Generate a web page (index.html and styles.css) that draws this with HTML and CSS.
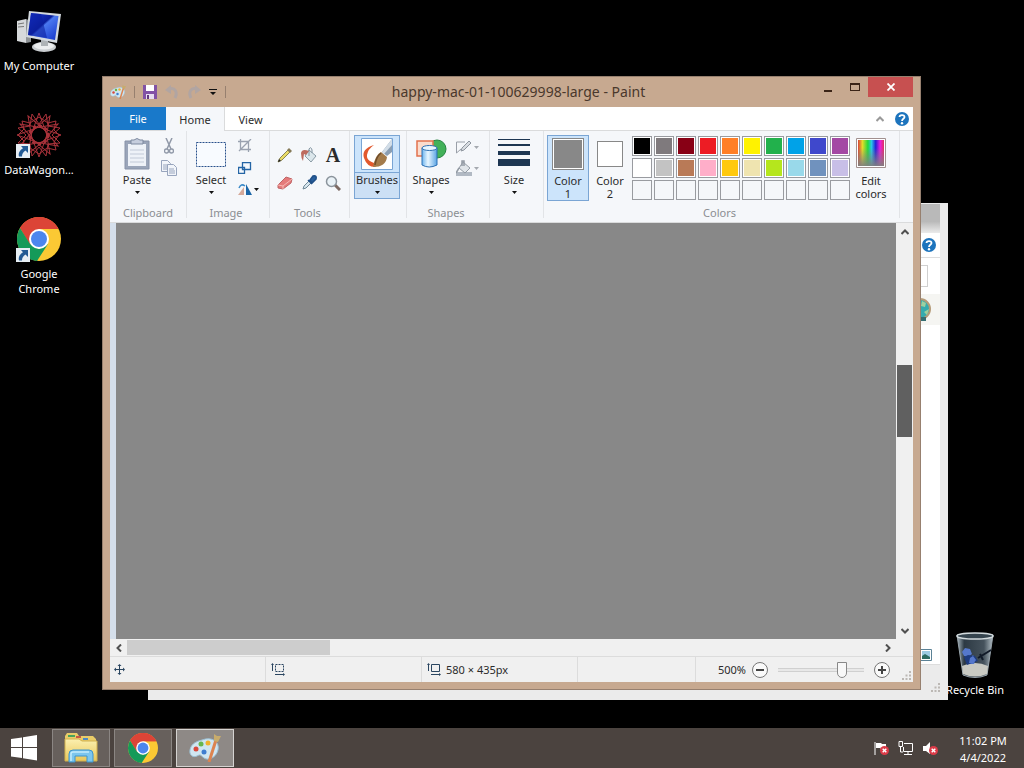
FILE: index.html
```html
<!DOCTYPE html>
<html lang="en">
  <head>
    <meta charset="UTF-8" />
    <meta name="viewport" content="width=device-width, initial-scale=1.0" />
    <title>happy-mac-01-100629998-large - Paint</title>
    <link rel="stylesheet" href="styles.css">
  </head>
  <body>
    <svg class="defs" aria-hidden="true">
      <defs>
        <linearGradient id="screen" x1="0" y1="0" x2="1" y2="1">
          <stop offset="0" stop-color="#1a3ce0" />
          <stop offset="0.45" stop-color="#0a1e9c" />
          <stop offset="0.5" stop-color="#4a78f0" />
          <stop offset="1" stop-color="#1232c8" />
        </linearGradient>
        <linearGradient id="folder" x1="0" y1="0" x2="0" y2="1">
          <stop offset="0" stop-color="#fbf0b0" />
          <stop offset="1" stop-color="#e9c75a" />
        </linearGradient>
        <linearGradient id="glass" x1="0" y1="0" x2="1" y2="0">
          <stop offset="0" stop-color="#a9b7bf" />
          <stop offset="0.2" stop-color="#2d3a44" />
          <stop offset="0.75" stop-color="#45525c" />
          <stop offset="1" stop-color="#b4c0c7" />
        </linearGradient>
        <linearGradient id="cylinder" x1="0" y1="0" x2="1" y2="0">
          <stop offset="0" stop-color="#6db4ee" />
          <stop offset="0.4" stop-color="#e8f6ff" />
          <stop offset="1" stop-color="#5aa4e4" />
        </linearGradient>
        <linearGradient id="rainbow" x1="0" y1="0" x2="1" y2="0">
          <stop offset="0" stop-color="#d8403a" />
          <stop offset="0.17" stop-color="#e6dc28" />
          <stop offset="0.38" stop-color="#22d83c" />
          <stop offset="0.52" stop-color="#28c8e8" />
          <stop offset="0.68" stop-color="#2620d8" />
          <stop offset="0.85" stop-color="#e81ee0" />
          <stop offset="1" stop-color="#e03060" />
        </linearGradient>
        <linearGradient id="fade" x1="0" y1="0" x2="0" y2="1">
          <stop offset="0.3" stop-color="#808080" stop-opacity="0" />
          <stop offset="1" stop-color="#808080" stop-opacity="0.95" />
        </linearGradient>
        <symbol id="chrome" viewBox="0 0 44 44">
          <circle cx="22" cy="22" r="22" fill="#fbc934" />
          <path d="M22 22 3 11A22 22 0 0 1 41 11V12H22Z" fill="#dc4437" />
          <path d="M22 12H41.600A22 22 0 0 0 3 11L13 28Z" fill="#dc4437" />
          <path d="M3 11A22 22 0 0 0 20 44L31 27 22 32 13 27Z" fill="#149a59" />
          <circle cx="22" cy="22" r="10" fill="#fff" />
          <circle cx="22" cy="22" r="8" fill="#4c86ee" />
        </symbol>
        <symbol id="shortcut" viewBox="0 0 14 14">
          <path d="M0 0H14V14H0Z" fill="#e6eef4" />
          <path d="M5 2H12V9L9.500 6.500C7 8 6 10 6 12.500H3C2 9 4 6 7 4.200Z" fill="#225a94" />
        </symbol>
        <symbol id="palette" viewBox="0 0 32 28">
          <path d="M13 6C23 2 31 8 29 16S19 27 15 24 12 20 8 22 0 21 1 16 5 8 13 6Z" fill="#cfe6f2" stroke="#9cc0d4" />
          <circle cx="7" cy="15" r="2.500" fill="#d8493c" />
          <circle cx="12" cy="10" r="2.500" fill="#66b64e" />
          <circle cx="19" cy="9" r="2.500" fill="#f0b22e" />
          <circle cx="15" cy="18" r="2.500" fill="#3f7ed0" />
          <path d="M27 6 20 28" stroke="#dc8450" stroke-width="3" />
          <path d="M25 0 28 2 32 2 29 8 25 7Z" fill="#c8ac6c" />
        </symbol>
        <symbol id="help" viewBox="0 0 14 14">
          <circle cx="7" cy="7" r="7" fill="#1d74bd" />
          <path d="M4.500 5C4.500 2.500 9.500 2.300 9.500 5 9.500 6.800 7 6.800 7 9" fill="none" stroke="#fff" stroke-width="1.800" />
          <circle cx="7" cy="11.200" r="1.200" fill="#fff" />
        </symbol>
        <symbol id="down" viewBox="0 0 5 3">
          <path d="M0 0H5L2.500 3Z" fill="currentColor" />
        </symbol>
        <symbol id="grip" viewBox="0 0 9 9">
          <path d="M7 0H9V2H7ZM3.500 3.500H5.500V5.500H3.500ZM7 3.500H9V5.500H7ZM0 7H2V9H0ZM3.500 7H5.500V9H3.500ZM7 7H9V9H7Z" fill="#bcb8b4" />
        </symbol>
        <symbol id="muted" viewBox="0 0 10 10">
          <circle cx="5" cy="5" r="5" fill="#dc3b48" />
          <path d="M3 3 7 7M7 3 3 7" stroke="#fff" stroke-width="1.600" />
        </symbol>
      </defs>
    </svg>

    <div class="screen">
      <main class="desktop">
        <a href="#" class="shortcut my-computer">
          <svg width="46" height="42" viewBox="0 0 46 42">
            <path d="M1 11 10 9V33L1 31Z" fill="#d6d9db" />
            <path d="M10 9 15 11V32L10 33Z" fill="#8d9295" />
            <path d="M2 14 8 13M2 17 8 16.500" stroke="#777" />
            <ellipse cx="28" cy="37" rx="12" ry="5" fill="#c9cdd0" />
            <ellipse cx="28" cy="36" rx="10" ry="3.500" fill="#eceeef" />
            <path d="M25 29H32V36H25Z" fill="#aeb3b6" />
            <path d="M13 1 45 4 41 33 10 27Z" fill="#d3d9df" />
            <path d="M15 3 42.500 6 39 30 12 25Z" fill="url(#screen)" />
            <path d="M15 3 25 4 31 28 12 25Z" fill="#0c1fa0" opacity="0.6" />
          </svg>
          <span>My Computer</span>
        </a>
        <a href="#" class="shortcut">
          <svg width="46" height="46" viewBox="0 0 46 46">
            <g fill="none" stroke="#a8323a" stroke-width="1">
              <path d="M23 1 31 23 23 45 15 23ZM1 23 23 15 45 23 23 31Z" />
              <path d="M23 1 31 23 23 45 15 23ZM1 23 23 15 45 23 23 31Z" transform="rotate(30 23 23)" />
              <path d="M23 1 31 23 23 45 15 23ZM1 23 23 15 45 23 23 31Z" transform="rotate(60 23 23)" />
              <path d="M6 9 14 11 23 5 32 11 40 9 38 18 43 23 38 30 40 38 31 36 23 42 14 36 6 38 8 29 2 23 8 17Z" />
              <path d="M16 2 23 12 30 2 32 14 44 16 36 23 44 31 32 32 30 44 23 35 16 44 14 32 2 31 10 23 2 16 14 14Z" />
              <circle cx="23" cy="23" r="9" stroke-width="3" stroke-dasharray="3 3" />
            </g>
            <circle cx="23" cy="23" r="4" fill="#000" />
            <use href="#shortcut" y="32" width="14" height="14" />
          </svg>
          <span>DataWagon...</span>
        </a>
        <a href="#" class="shortcut">
          <svg width="46" height="46" viewBox="0 0 46 46">
            <use href="#chrome" x="1" y="1" width="44" height="44" />
            <use href="#shortcut" y="32" width="14" height="14" />
          </svg>
          <span>Google<br />Chrome</span>
        </a>
        <a href="#" class="shortcut recycle-bin">
          <svg width="38" height="46" viewBox="0 0 38 46">
            <path d="M1 3 7 43Q19 48 31 43L37 3Z" fill="url(#glass)" stroke="#98a4ac" />
            <ellipse cx="19" cy="4" rx="18" ry="3" fill="#35444e" stroke="#d2dadd" stroke-width="1.500" />
            <path d="M6 34Q19 28 32 34L31 42Q19 47 7 42Z" fill="#c9cac3" />
            <path d="M6 20 9 16 14 17 16 22 12 25 8 24ZM13 26 17 23 20 27 18 32 13 32Z" fill="#5578cc" />
            <path d="M8 25 12 23 19 24 22 29 11 33Z" fill="#1e3c80" />
            <path d="M14 26 17 24 20 28 17 32 13 31Z" fill="#5578cc" />
            <path d="M22 26 35 18M24 22 27 28" stroke="#111a28" stroke-width="2" fill="none" />
          </svg>
          <span>Recycle Bin</span>
        </a>

        <section class="back-window" aria-label="Explorer">
          <div class="back-title"></div>
          <div class="back-tabs"><svg width="14" height="14"><use href="#help" /></svg></div>
          <div class="back-address"><span></span></div>
          <div class="back-toolbar">
            <svg width="24" height="24" viewBox="0 0 24 24">
              <circle cx="12" cy="11" r="10" fill="#36abae" stroke="#b59b78" stroke-width="2" />
              <path d="M14 3 18 5 17 9 13 8ZM16 14 21 11 19 17Z" fill="#9ed0a0" />
              <path d="M8 19H18V23H8Z" fill="#356e72" />
            </svg>
          </div>
          <div class="back-files"></div>
          <div class="back-status">
            <svg width="12" height="12" viewBox="0 0 12 12">
              <path d="M0.500 0.500H11.500V11.500H0.500Z" fill="#fff" stroke="#5b8296" />
              <path d="M2 2H10V10H2Z" fill="#9ccbe2" />
              <path d="M2 7 5 5 10 8V10H2Z" fill="#2c6c62" />
            </svg>
          </div>
          <svg class="back-grip" width="9" height="9"><use href="#grip" /></svg>
        </section>

        <section class="window" aria-label="Paint">
          <header class="titlebar">
            <div class="quick-access">
              <svg width="16" height="14"><use href="#palette" /></svg>
              <i></i>
              <button aria-label="Save">
                <svg width="14" height="14" viewBox="0 0 14 14">
                  <path d="M0 0H14V14H0Z" fill="#8252a5" />
                  <path d="M3 0H11V6H3Z" fill="#fff" />
                  <path d="M3 9H11V14H3Z" fill="#e7def0" />
                  <path d="M4 10H6V14H4Z" fill="#63377f" />
                </svg>
              </button>
              <button aria-label="Undo">
                <svg width="14" height="14" viewBox="0 0 14 14">
                  <path d="M4 4C10 2 13 7 10 13" fill="none" stroke="#b1a5a2" stroke-width="3" />
                  <path d="M0 5 6 0V9Z" fill="#b1a5a2" />
                </svg>
              </button>
              <button aria-label="Redo">
                <svg width="14" height="14" viewBox="0 0 14 14">
                  <path d="M10 4C4 2 1 7 4 13" fill="none" stroke="#b1a5a2" stroke-width="3" />
                  <path d="M14 5 8 0V9Z" fill="#b1a5a2" />
                </svg>
              </button>
              <button aria-label="Customize">
                <svg width="8" height="6" viewBox="0 0 8 6"><path d="M0 0H8V1H0ZM1 3H7L4 6Z" fill="#111" /></svg>
              </button>
              <i></i>
            </div>
            <h1>happy-mac-01-100629998-large - Paint</h1>
            <div class="window-buttons">
              <button aria-label="Minimize"><svg width="8" height="10" viewBox="0 0 8 10"><path d="M0 8H8V10H0Z" fill="#3b2417" /></svg></button>
              <button aria-label="Maximize"><svg width="10" height="8" viewBox="0 0 10 8"><path d="M0 0H10V8H0ZM1 2V7H9V2Z" fill="#3b2417" fill-rule="evenodd" /></svg></button>
              <button class="close" aria-label="Close"><svg width="8" height="8" viewBox="0 0 8 8"><path d="M0.500 0.500 7.500 7.500M7.500 0.500 0.500 7.500" stroke="#fff" stroke-width="1.800" /></svg></button>
            </div>
          </header>

          <nav class="tabs">
            <button class="tab file">File</button>
            <button class="tab active">Home</button>
            <button class="tab">View</button>
            <div class="tab-tools">
              <button aria-label="Minimize the Ribbon"><svg width="8" height="6" viewBox="0 0 8 6"><path d="M0.500 5 4 1.500 7.500 5" fill="none" stroke="#999" stroke-width="2" /></svg></button>
              <button aria-label="Help"><svg width="14" height="14"><use href="#help" /></svg></button>
            </div>
          </nav>

          <div class="ribbon">
            <div class="group clipboard">
              <div class="tools">
                <button class="big">
                  <svg width="26" height="32" viewBox="0 0 26 32">
                    <path d="M1 3H25V31H1Z" fill="#9aa5b9" stroke="#8792a8" />
                    <path d="M4 6H22V28H4Z" fill="#eef2f8" />
                    <path d="M6 12H20M6 16H20M6 20H20M6 24H20" stroke="#c2cad8" />
                    <path d="M7 2H10Q13-1 16 2H19V6H7Z" fill="#c6cede" stroke="#7d899f" />
                  </svg>
                  <span>Paste</span>
                  <svg class="arrow"><use href="#down" /></svg>
                </button>
                <div class="stack">
                  <button aria-label="Cut">
                    <svg width="10" height="16" viewBox="0 0 10 16">
                      <path d="M2 0 7 11M8 0 3 11" stroke="#9199a8" stroke-width="1.500" />
                      <circle cx="2.500" cy="13" r="2" fill="none" stroke="#9199a8" stroke-width="1.400" />
                      <circle cx="7.500" cy="13" r="2" fill="none" stroke="#9199a8" stroke-width="1.400" />
                    </svg>
                  </button>
                  <button aria-label="Copy">
                    <svg width="16" height="16" viewBox="0 0 16 16" fill="#f2f5fa" stroke="#98a5bd">
                      <path d="M0.500 0.500H6.500L9.500 3.500V11.500H0.500ZM2 5H7M2 7H7M2 9H7" />
                      <path d="M6.500 4.500H12.500L15.500 7.500V15.500H6.500ZM8 9H13M8 11H14M8 13H14" />
                    </svg>
                  </button>
                </div>
              </div>
              <p>Clipboard</p>
            </div>

            <div class="group image">
              <div class="tools">
                <button class="big">
                  <svg width="32" height="32" viewBox="0 0 32 32"><path d="M1.500 4.500H30.500V28.500H1.500Z" fill="#f8fbff" stroke="#28508c" stroke-dasharray="2 1" /></svg>
                  <span>Select</span>
                  <svg class="arrow"><use href="#down" /></svg>
                </button>
                <div class="stack">
                  <button aria-label="Crop"><svg width="14" height="14" viewBox="0 0 14 14"><path d="M2.500 0V10.500H13M0 2.500H10.500V13M1 12 13 0" fill="none" stroke="#9aa2b0" stroke-width="1.300" /></svg></button>
                  <button aria-label="Resize"><svg width="14" height="12" viewBox="0 0 14 12"><path d="M4.500 0.500H12.500V7.500H4.500ZM0.500 5.500H6.500V11.500H0.500Z" fill="#f5f8fc" stroke="#2565a5" stroke-width="1.300" /></svg></button>
                  <button aria-label="Rotate" class="split">
                    <svg width="14" height="12" viewBox="0 0 14 12"><path d="M6 4V12H0Z" fill="#d5a99a" /><path d="M8 1V12H14Z" fill="#1b66a8" /><path d="M1 5Q3 0 7 3" fill="none" stroke="#3c8ac8" stroke-width="1.500" /></svg>
                    <svg class="arrow"><use href="#down" /></svg>
                  </button>
                </div>
              </div>
              <p>Image</p>
            </div>

            <div class="group tool-group">
              <div class="tool-grid">
                <button aria-label="Pencil"><svg width="16" height="16" viewBox="0 0 16 16"><path d="M1 15 3 11 12 2 14 4 5 13Z" fill="#eadc66" stroke="#8a8452" /><path d="M12 1 15 4 13 6 10 3Z" fill="#857a58" /><path d="M1 15 2 12 4 14Z" fill="#222" /></svg></button>
                <button aria-label="Fill with color"><svg width="16" height="16" viewBox="0 0 16 16"><path d="M8 3 15 9 10 15 4 9Z" fill="#dbe6eb" stroke="#8a9ba5" /><path d="M8 9V2Q10-1 11 3V6" fill="none" stroke="#8093a0" /><path d="M0 6Q1 1 8 4L5 8 3 7 2 14Q0 11 0 6Z" fill="#bd6a5e" /></svg></button>
                <button class="text-tool" aria-label="Text">A</button>
                <button aria-label="Eraser"><svg width="16" height="14" viewBox="0 0 16 14"><path d="M1 9 9 1 15 3 14 7 6 13 1 12Z" fill="#e57b7b" stroke="#bf6466" /><path d="M1 9 6 10 15 3M6 10V13" fill="none" stroke="#f6b9b4" /></svg></button>
                <button aria-label="Color picker"><svg width="16" height="16" viewBox="0 0 16 16"><path d="M2 14 3 11 8 6 10 8 5 13Z" fill="#d7e6ee" stroke="#6f8796" /><path d="M7 5 11 9M9 5 12 1Q16 0 15 4L11 8Z" fill="#285f9d" stroke="#1f4f87" stroke-width="1.500" /></svg></button>
                <button aria-label="Magnifier"><svg width="16" height="16" viewBox="0 0 16 16"><path d="M10 10 15 15" stroke="#7d6a63" stroke-width="3" /><circle cx="6.500" cy="6.500" r="5" fill="#eaf2f7" stroke="#8b949c" stroke-width="1.500" /></svg></button>
              </div>
              <p>Tools</p>
            </div>

            <div class="group brush-group">
              <button class="big brushes">
                <svg width="32" height="32" viewBox="0 0 32 32">
                  <path d="M0.500 0.500H31.500V31.500H0.500Z" fill="#fff" stroke="#7aa5d4" />
                  <path d="M13 7Q0 11 3 20T14 29L18 26Q5 24 6 17 7 11 13 7Z" fill="#e2592e" />
                  <path d="M31 1 21 14 26 18 31 14Z" fill="#8b9fb4" />
                  <path d="M31 1 21 14 23 16 31 7Z" fill="#d3dee8" />
                  <path d="M20 14 26 19Q25 29 12 29 14 17 20 14Z" fill="#a37b4b" />
                  <path d="M20 15Q15 19 14 27" fill="none" stroke="#6f4c2a" stroke-width="1.500" />
                </svg>
                <span>Brushes</span>
                <svg class="arrow"><use href="#down" /></svg>
              </button>
            </div>

            <div class="group shape-group">
              <div class="tools">
                <button class="big">
                  <svg width="32" height="32" viewBox="0 0 32 32">
                    <circle cx="22" cy="11" r="9" fill="#42b159" stroke="#268441" />
                    <path d="M2 3H18V18H2Z" fill="#fbdccd" stroke="#e2714e" stroke-width="1.500" />
                    <path d="M7 10V27Q14 31 22 27V10Z" fill="url(#cylinder)" stroke="#2d70b3" />
                    <ellipse cx="14.500" cy="10" rx="7.500" ry="2.500" fill="#e7f5ff" stroke="#2d70b3" />
                  </svg>
                  <span>Shapes</span>
                  <svg class="arrow"><use href="#down" /></svg>
                </button>
                <div class="stack">
                  <button aria-label="Outline" class="split faded"><svg width="16" height="14" viewBox="0 0 16 14"><path d="M9 2H0.500V13L5 9" fill="none" stroke="#999fa8" /><path d="M5 11 6 8 13 1 15 3 8 10Z" fill="#d8dce1" stroke="#8e959e" /></svg><svg class="arrow"><use href="#down" /></svg></button>
                  <button aria-label="Fill" class="split faded"><svg width="16" height="16" viewBox="0 0 16 16"><path d="M0 12H16V16H0Z" fill="#b1b9c3" /><path d="M7 2 14 8 9 13 3 8Z" fill="#e0e5e9" stroke="#939ba4" /><path d="M6 6V1H8V6M3 8 0 13" fill="none" stroke="#939ba4" stroke-width="1.500" /></svg><svg class="arrow"><use href="#down" /></svg></button>
                </div>
              </div>
              <p>Shapes</p>
            </div>

            <div class="group size-group">
              <button class="big">
                <svg width="32" height="32" viewBox="0 0 32 32"><path d="M0 1H32V2H0ZM0 6H32V8H0ZM0 13H32V17H0ZM0 21H32V28H0Z" fill="#1d3652" /></svg>
                <span>Size</span>
                <svg class="arrow"><use href="#down" /></svg>
              </button>
            </div>

            <div class="group color-group">
              <div class="colors">
                <button class="color-button selected"><i class="chip gray"></i><span>Color<br />1</span></button>
                <button class="color-button"><i class="chip small"></i><span>Color<br />2</span></button>
                <div class="swatches">
                  <button class="black" aria-label="Black"></button>
                  <button class="gray-50" aria-label="Gray-50%"></button>
                  <button class="dark-red" aria-label="Dark red"></button>
                  <button class="red" aria-label="Red"></button>
                  <button class="orange" aria-label="Orange"></button>
                  <button class="yellow" aria-label="Yellow"></button>
                  <button class="green" aria-label="Green"></button>
                  <button class="turquoise" aria-label="Turquoise"></button>
                  <button class="indigo" aria-label="Indigo"></button>
                  <button class="purple" aria-label="Purple"></button>
                  <button class="white" aria-label="White"></button>
                  <button class="gray-25" aria-label="Gray-25%"></button>
                  <button class="brown" aria-label="Brown"></button>
                  <button class="rose" aria-label="Rose"></button>
                  <button class="gold" aria-label="Gold"></button>
                  <button class="light-yellow" aria-label="Light yellow"></button>
                  <button class="lime" aria-label="Lime"></button>
                  <button class="light-turquoise" aria-label="Light turquoise"></button>
                  <button class="blue-gray" aria-label="Blue-gray"></button>
                  <button class="lavender" aria-label="Lavender"></button>
                  <button class="empty" aria-label="Custom 1"></button>
                  <button class="empty" aria-label="Custom 2"></button>
                  <button class="empty" aria-label="Custom 3"></button>
                  <button class="empty" aria-label="Custom 4"></button>
                  <button class="empty" aria-label="Custom 5"></button>
                  <button class="empty" aria-label="Custom 6"></button>
                  <button class="empty" aria-label="Custom 7"></button>
                  <button class="empty" aria-label="Custom 8"></button>
                  <button class="empty" aria-label="Custom 9"></button>
                  <button class="empty" aria-label="Custom 10"></button>
                </div>
                <button class="color-button edit">
                  <svg width="30" height="30" viewBox="0 0 30 30">
                    <path d="M0.500 0.500H29.500V29.500H0.500Z" fill="#fff" stroke="#a1908f" />
                    <path d="M2 2H28V28H2Z" fill="url(#rainbow)" />
                    <path d="M2 2H28V28H2Z" fill="url(#fade)" />
                  </svg>
                  <span>Edit<br />colors</span>
                </button>
              </div>
              <p>Colors</p>
            </div>
          </div>

          <div class="workspace">
            <div class="canvas"></div>
            <div class="scroll-y">
              <button aria-label="Scroll up"><svg width="8" height="6" viewBox="0 0 8 6"><path d="M0.500 5 4 1.500 7.500 5" fill="none" stroke="#505050" stroke-width="2" /></svg></button>
              <div class="track"><div class="thumb"></div></div>
              <button aria-label="Scroll down"><svg width="8" height="6" viewBox="0 0 8 6"><path d="M0.500 1 4 4.500 7.500 1" fill="none" stroke="#505050" stroke-width="2" /></svg></button>
            </div>
            <div class="scroll-x">
              <button aria-label="Scroll left"><svg width="6" height="8" viewBox="0 0 6 8"><path d="M5 0.500 1.500 4 5 7.500" fill="none" stroke="#505050" stroke-width="2" /></svg></button>
              <div class="track"><div class="thumb"></div></div>
              <button aria-label="Scroll right"><svg width="6" height="8" viewBox="0 0 6 8"><path d="M1 0.500 4.500 4 1 7.500" fill="none" stroke="#505050" stroke-width="2" /></svg></button>
            </div>
          </div>

          <footer class="status">
            <div class="cell"><svg width="11" height="11" viewBox="0 0 11 11"><path d="M5.500 1V10M1 5.500H10" stroke="#2a4560" /><path d="M5.500 0 7.500 2H3.500ZM5.500 11 3.500 9H7.500ZM0 5.500 2 3.500V7.500ZM11 5.500 9 7.500V3.500Z" fill="#2a4560" /></svg></div>
            <div class="cell"><svg width="14" height="13" viewBox="0 0 14 13"><path d="M4.500 1.500H12.500V8.500H4.500Z" fill="none" stroke="#2a4560" stroke-dasharray="2 1" /><path d="M1.500 1V8M4 11.500H13" stroke="#2a4560" /><path d="M1.500 0 3 2H0ZM14 11.500 12 10V13Z" fill="#2a4560" /></svg></div>
            <div class="cell"><svg width="14" height="13" viewBox="0 0 14 13"><path d="M4.500 1.500H12.500V8.500H4.500Z" fill="none" stroke="#2a4560" /><path d="M1.500 1V8M4 11.500H13" stroke="#2a4560" /><path d="M1.500 0 3 2H0ZM14 11.500 12 10V13Z" fill="#2a4560" /></svg><span>580 × 435px</span></div>
            <div class="cell spacer"></div>
            <div class="zoom">
              <label for="zoom">500%</label>
              <button aria-label="Zoom out"><svg width="16" height="16" viewBox="0 0 16 16"><circle cx="8" cy="8" r="7.500" fill="#fafafa" stroke="#777" /><path d="M4 7H12V9H4Z" fill="#444" /></svg></button>
              <input type="range" id="zoom" min="0" max="100" value="78" />
              <button aria-label="Zoom in"><svg width="16" height="16" viewBox="0 0 16 16"><circle cx="8" cy="8" r="7.500" fill="#fafafa" stroke="#777" /><path d="M4 7H7V4H9V7H12V9H9V12H7V9H4Z" fill="#444" /></svg></button>
            </div>
            <svg class="grip" width="9" height="9"><use href="#grip" /></svg>
          </footer>
        </section>
      </main>

      <footer class="taskbar">
        <button class="start" aria-label="Start"><svg width="26" height="26" viewBox="0 0 26 26"><path d="M0 4 11 2.500V12H0ZM12 2.300 26 0V12H12ZM0 13H11V23L0 21.500ZM12 13H26V25.500L12 23.300Z" fill="#fff" /></svg></button>
        <button class="task" aria-label="File Explorer">
          <svg width="34" height="30" viewBox="0 0 34 30">
            <path d="M1 3 3 0H13L15 3H29L32 6V27H1Z" fill="#e9cc68" />
            <path d="M4 2H11V4H4Z" fill="#48a35c" /><path d="M12 3H17V5H12Z" fill="#c95a44" />
            <path d="M19 5H24V7H19Z" fill="#4f8bc2" />
            <path d="M1 6H15L18 8H33V28H1Z" fill="url(#folder)" stroke="#d2b14e" />
            <path d="M5 29V21Q5 17 9 17H25Q29 17 29 21V29H23V23H11V29Z" fill="#7cc6ee" stroke="#3c94cc" />
            <path d="M7 28V21Q7 19 9 19H25" fill="none" stroke="#c4ebfc" stroke-width="1.500" />
          </svg>
        </button>
        <button class="task" aria-label="Google Chrome"><svg width="30" height="30"><use href="#chrome" /></svg></button>
        <button class="task current" aria-label="Paint"><svg width="32" height="28"><use href="#palette" /></svg></button>
        <div class="tray">
          <svg width="15" height="15" viewBox="0 0 15 15"><path d="M1 1V14" stroke="#fff" /><path d="M2 2H7L8 3H12V8H7L6 7H2Z" fill="#fff" /><use href="#muted" x="6" y="5" width="9" height="9" /></svg>
          <svg width="16" height="14" viewBox="0 0 16 14"><path d="M6 2.500H14.500V10.500H5.500V6M10 11V13M6 13.500H14M2.500 6V11H5M1 0.500H4.500V5.500H1Z" fill="none" stroke="#fff" /></svg>
          <svg width="15" height="15" viewBox="0 0 15 15"><path d="M0 5H3L7 1V13L3 10H0Z" fill="#fff" /><use href="#muted" x="6" y="5" width="9" height="9" /></svg>
        </div>
        <div class="clock">11:02 PM<br />4/4/2022</div>
      </footer>
    </div>
  </body>
</html>
```
FILE: styles.css
```css
* {
  box-sizing: border-box;
}
body {
  margin: 0;
  background-color: #000;
  font-family: "Noto Sans", "Open Sans", sans-serif;
  font-size: 11px;
  color: #2b2b2b;
}
button {
  padding: 0;
  border: 0;
  background: none;
  font: inherit;
  color: inherit;
}
svg {
  display: block;
  flex: none;
}
p,
h1 {
  margin: 0;
}
.defs {
  position: absolute;
  width: 0;
  height: 0;
}
.screen {
  display: flex;
  flex-direction: column;
  height: 100vh;
  overflow: hidden;
}

/* desktop */
.desktop {
  position: relative;
  flex: 1;
  display: flex;
  flex-direction: column;
  align-items: flex-start;
  padding-top: 10px;
}
.shortcut {
  display: flex;
  flex-direction: column;
  align-items: center;
  gap: 4px;
  width: 78px;
  height: 104px;
  color: #fff;
  font-size: 12px;
  line-height: 15px;
  text-align: center;
  text-decoration: none;
  white-space: nowrap;
}
.my-computer {
  height: 102px;
  gap: 6px;
}
.recycle-bin {
  position: absolute;
  right: 10px;
  bottom: 0;
  height: 96px;
}
.shortcut span {
  font-size: 11px;
}

/* explorer window behind */
.back-window {
  position: absolute;
  top: 203px;
  right: 76px;
  bottom: 28px;
  left: 148px;
  display: flex;
  flex-direction: column;
  padding: 1px 8px 8px;
  background-color: #ebebeb;
}
.back-title {
  height: 29px;
  background: linear-gradient(#b9b9b9 60%, #ebebeb);
}
.back-tabs,
.back-address,
.back-toolbar,
.back-status {
  display: flex;
  justify-content: flex-end;
  align-items: center;
  background-color: #fff;
}
.back-tabs {
  height: 25px;
  padding-right: 4px;
  border-bottom: 1px solid #ddd;
}
.back-address {
  height: 36px;
  padding-right: 12px;
}
.back-address span {
  width: 200px;
  height: 22px;
  border: 1px solid #d0d0d0;
}
.back-toolbar {
  height: 31px;
  padding-right: 8px;
  background-color: #f5f5f2;
}
.back-files {
  flex: 1;
  background-color: #fff;
}
.back-status {
  height: 20px;
  padding-right: 8px;
  border-bottom: 1px solid #ddd;
}
.back-grip {
  align-self: flex-end;
  margin-top: 18px;
}

/* paint window */
.window {
  position: absolute;
  top: 76px;
  right: 103px;
  bottom: 38px;
  left: 102px;
  display: flex;
  flex-direction: column;
  padding: 0 7px 7px;
  border: 1px solid #97806f;
  background-color: #c7a990;
}
.titlebar {
  display: grid;
  grid-template-columns: 120px 1fr 106px;
  height: 30px;
}
.titlebar h1 {
  font-size: 14px;
  font-weight: normal;
  line-height: 30px;
  text-align: center;
  color: #4a382c;
  white-space: nowrap;
}
.quick-access {
  display: flex;
  align-items: center;
  gap: 8px;
}
.quick-access i {
  width: 1px;
  height: 12px;
  background-color: #97806f;
}
.window-buttons {
  display: flex;
  align-items: flex-start;
  justify-content: flex-end;
}
.window-buttons button {
  display: grid;
  place-items: center;
  width: 27px;
  height: 20px;
}
.window-buttons .close {
  width: 45px;
  background-color: #c75050;
}

/* tabs */
.tabs {
  display: flex;
  height: 24px;
  background-color: #fff;
  border-bottom: 1px solid #dadbdc;
}
.tab {
  width: 51px;
  height: 24px;
  line-height: 26px;
  text-align: center;
}
.tab.file {
  width: 56px;
  height: 23px;
  line-height: 24px;
  background-color: #1979ca;
  color: #fff;
}
.tab.active {
  width: 59px;
  background-color: #f5f7fa;
  border-right: 1px solid #dadbdc;
}
.tab-tools {
  display: flex;
  align-items: center;
  gap: 11px;
  margin-left: auto;
  padding-right: 4px;
}

/* ribbon */
.ribbon {
  display: flex;
  height: 92px;
  padding-bottom: 4px;
  background-color: #f5f7fa;
  border-bottom: 1px solid #dadbdc;
}
.group {
  display: flex;
  flex-direction: column;
  justify-content: space-between;
  padding-top: 4px;
  border-right: 1px solid #e2e4e7;
}
.group p {
  line-height: 16px;
  margin: 0 4px -3px 0;
  text-align: center;
  color: #8b8e92;
}
.clipboard {
  width: 77px;
}
.clipboard p {
  margin-right: 0;
}
.image {
  width: 83px;
}
.tool-group {
  width: 80px;
}
.brush-group {
  width: 57px;
  padding-left: 4px;
}
.shape-group {
  width: 83px;
}
.size-group {
  width: 54px;
}
.color-group {
  width: 356px;
}
.tools {
  display: flex;
}
.clipboard .tools {
  padding-left: 3px;
}
.big {
  display: flex;
  flex-direction: column;
  align-items: center;
  width: 48px;
  height: 64px;
  padding-top: 3px;
  line-height: 14px;
}
.big span {
  margin: 3px 0 4px;
}
.arrow {
  width: 5px;
  height: 3px;
  color: #111;
}
.brushes {
  width: 46px;
  padding-top: 2px;
  border: 1px solid #7aa5d4;
  background: linear-gradient(#cce4fb 36px, #7aa5d4 36px, #7aa5d4 37px, #cce0f5 37px);
}
.stack {
  display: flex;
  flex-direction: column;
  align-items: flex-start;
  gap: 9px;
  padding: 4px 0 0 3px;
}
.clipboard .stack {
  align-items: center;
  gap: 6px;
  padding: 3px 0 0;
}
.shape-group .stack {
  gap: 6px;
  padding: 5px 0 0 1px;
}
.split {
  display: flex;
  align-items: center;
  gap: 2px;
}
.faded .arrow {
  color: #a5a9af;
}
.tool-grid {
  display: grid;
  grid-template-columns: 24px 24px 24px;
  grid-template-rows: 28px 28px;
  padding: 6px 0 0 3px;
}
.tool-grid button {
  display: grid;
  place-items: center;
}
.tool-grid .text-tool {
  font-family: "Liberation Serif", serif;
  font-size: 20px;
  font-weight: bold;
  line-height: 20px;
}
.colors {
  display: flex;
  padding-left: 3px;
}
.color-button {
  display: flex;
  flex-direction: column;
  align-items: center;
  gap: 4px;
  width: 42px;
  height: 66px;
  padding-top: 3px;
  line-height: 13px;
}
.selected {
  border: 1px solid #7aa5d4;
  background-color: #cce4fb;
  padding-top: 2px;
}
.chip {
  width: 32px;
  height: 32px;
  border: 1px solid #888;
  background-color: #fff;
}
.chip.gray {
  background-color: #888;
  box-shadow: inset 0 0 0 1px #fff;
}
.chip.small {
  width: 26px;
  height: 26px;
  margin: 3px;
}
.swatches {
  display: grid;
  grid-template-columns: repeat(10, 20px);
  grid-auto-rows: 20px;
  gap: 2px;
  padding: 1px 0 0 1px;
}
.swatches button {
  border: 1px solid #999ba0;
  box-shadow: inset 0 0 0 1px #fff;
}
.color-button.edit {
  gap: 6px;
}
.swatches .black { background-color: #000; }
.swatches .gray-50 { background-color: #7f7a7d; }
.swatches .dark-red { background-color: #880015; }
.swatches .red { background-color: #ed1c24; }
.swatches .orange { background-color: #ff7f27; }
.swatches .yellow { background-color: #fff200; }
.swatches .green { background-color: #22b14c; }
.swatches .turquoise { background-color: #00a2e8; }
.swatches .indigo { background-color: #3f48cc; }
.swatches .purple { background-color: #a349a4; }
.swatches .white { background-color: #fff; }
.swatches .gray-25 { background-color: #c3c3c3; }
.swatches .brown { background-color: #b97a57; }
.swatches .rose { background-color: #ffaec9; }
.swatches .gold { background-color: #ffc90e; }
.swatches .light-yellow { background-color: #efe4b0; }
.swatches .lime { background-color: #b5e61d; }
.swatches .light-turquoise { background-color: #99d9ea; }
.swatches .blue-gray { background-color: #7092be; }
.swatches .lavender { background-color: #c8bfe7; }
.swatches .empty { box-shadow: none; }

/* canvas and scrollbars */
.workspace {
  flex: 1;
  display: grid;
  grid-template-columns: 1fr 17px;
  grid-template-rows: 1fr 17px;
  background-color: #f0f0f0;
}
.canvas {
  background-color: #888;
  border-left: 6px solid #d5dfeb;
}
.scroll-x,
.scroll-y {
  display: flex;
}
.scroll-y {
  flex-direction: column;
}
.scroll-x button,
.scroll-y button {
  display: grid;
  place-items: center;
  width: 17px;
  height: 17px;
}
.track {
  flex: 1;
  display: flex;
}
.scroll-y .track {
  flex-direction: column;
}
.scroll-x .thumb {
  width: 27%;
  margin: 1px 0;
  background-color: #cdcdcd;
}
.scroll-y .thumb {
  height: 72px;
  margin: 125px 1px 0;
  background-color: #606060;
}

/* status bar */
.status {
  display: flex;
  height: 26px;
  background-color: #f0f0f0;
  border-top: 1px solid #dcdcdc;
}
.cell {
  display: flex;
  align-items: center;
  gap: 5px;
  width: 156px;
  padding-left: 4px;
  border-right: 1px solid #dcdcdc;
}
.cell + .cell {
  padding-left: 5px;
}
.cell.spacer {
  flex: 1;
}
.zoom {
  display: flex;
  align-items: center;
  gap: 6px;
  width: 194px;
  justify-content: flex-end;
}
.zoom input {
  appearance: none;
  width: 86px;
  height: 16px;
  margin: 0 4px;
  background: linear-gradient(#d0d0d0 1px, #e8e8e8 1px, #e8e8e8 3px, #d0d0d0 3px) center / 100% 4px no-repeat;
}
.zoom input::-webkit-slider-thumb {
  appearance: none;
  width: 10px;
  height: 16px;
  border: 1px solid #888;
  border-radius: 0 0 5px 5px;
  background-color: #f8f8f8;
}
.status .grip {
  align-self: flex-end;
  margin: 0 2px 2px 12px;
}

/* taskbar */
.taskbar {
  display: flex;
  align-items: center;
  gap: 4px;
  height: 40px;
  background-color: #4b433f;
  color: #fff;
}
.start {
  display: grid;
  place-items: center;
  width: 48px;
  height: 38px;
}
.task {
  display: grid;
  place-items: center;
  width: 58px;
  height: 38px;
  border: 1px solid #8b8683;
  background-color: #67605c;
}
.current {
  border-color: #d5d3d1;
  background-color: #8e8986;
}
.tray {
  display: flex;
  align-items: center;
  gap: 9px;
  margin-left: auto;
}
.clock {
  width: 82px;
  padding-top: 1px;
  line-height: 17px;
  text-align: center;
}
```
